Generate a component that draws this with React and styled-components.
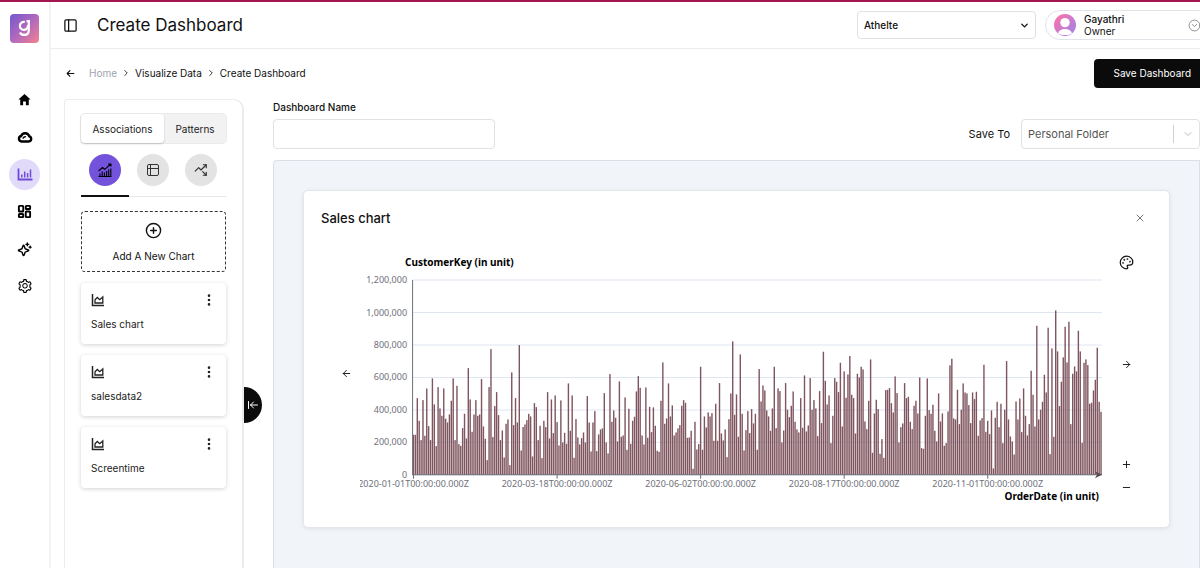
import React from 'react';
import styled, { createGlobalStyle } from 'styled-components';
import {
  ArrowLeft,
  ArrowLeftToLine,
  ArrowRight,
  ChevronDown,
  ChevronRight,
  CircleChevronDown,
  CirclePlus,
  LayoutDashboard,
  Minus,
  Palette,
  PanelLeft,
  Plus,
  TrendingUpDown,
  X,
} from 'lucide-react';
import { AiOutlineSetting } from 'react-icons/ai';
import { BsThreeDotsVertical } from 'react-icons/bs';
import { FaArrowLeft } from 'react-icons/fa6';
import { IoMdHome } from 'react-icons/io';
import { PiSparkleBold } from 'react-icons/pi';

const GlobalStyle = createGlobalStyle`
  * {
    box-sizing: border-box;
  }

  body {
    margin: 0;
    background: #fff;
    color: #111;
    font-family: Inter, 'Open Sans', sans-serif;
    font-size: 11px;
    overflow: hidden;
  }

  button, input, select {
    font: inherit;
    color: inherit;
  }

  button {
    padding: 0;
    border: 0;
    background: none;
    cursor: pointer;
  }

  svg {
    display: block;
    flex-shrink: 0;
  }
`;

const Page = styled.div`
  display: flex;
  min-height: 100vh;
  border-top: 2px solid #a3164f;
`;

const Sidebar = styled.aside`
  display: flex;
  flex-direction: column;
  align-items: center;
  width: 51px;
  padding-top: 12px;
  border-right: 2px solid #f3f3f4;
`;

const SideNav = styled.nav`
  display: flex;
  flex-direction: column;
  justify-content: space-between;
  height: 218px;
  margin-top: 41px;
`;

const SideLink = styled.a`
  display: flex;
  align-items: center;
  justify-content: center;
  width: 31px;
  height: 31px;
  border-radius: 50%;
  color: ${({ $active }) => ($active ? '#6d4bd8' : '#000')};
  background: ${({ $active }) => ($active ? '#e2daf9' : 'transparent')};
`;

const Main = styled.main`
  display: flex;
  flex: 1;
  flex-direction: column;
  min-width: 0;
  overflow: hidden;
`;

const TopBar = styled.header`
  display: flex;
  align-items: center;
  height: 47px;
  padding-left: 12px;
  border-bottom: 1px solid #ececee;
`;

const Title = styled.h1`
  flex: 1;
  margin: 0 0 0 19px;
  font-size: 17px;
  font-weight: 400;
`;

const SelectBox = styled.div`
  position: relative;
  display: flex;
  align-items: center;
  width: 179px;
  height: ${({ $height }) => $height};
  border: 1px solid #dfe1e5;
  border-radius: 4px;
  color: ${({ $muted }) => ($muted ? '#555' : '#111')};

  select {
    width: 100%;
    height: 100%;
    padding: 0 28px 0 6px;
    border: 0;
    background: none;
    font-size: ${({ $muted }) => ($muted ? '11px' : '10px')};
    font-weight: ${({ $muted }) => ($muted ? '400' : '500')};
    appearance: none;
  }
`;

const SelectArrow = styled.span`
  position: absolute;
  right: 5px;
  display: flex;
  align-items: center;
  height: 18px;
  padding-left: 8px;
  border-left: 1px solid ${({ $divided }) => ($divided ? '#d0d0d0' : 'transparent')};
  color: ${({ $divided }) => ($divided ? '#bbb' : '#111')};
  pointer-events: none;
`;

const Profile = styled.button`
  display: flex;
  align-items: center;
  width: 168px;
  height: 30px;
  margin: 0 -13px 0 9px;
  padding: 0 11px 0 8px;
  border: 1px solid #e2e3e8;
  border-radius: 15px;
  text-align: left;
  line-height: 12px;
`;

const ProfileText = styled.span`
  flex: 1;
  margin-left: 8px;
  font-size: 10px;
`;

const ProfileName = styled.span`
  display: block;
  font-weight: 500;
`;

const CrumbBar = styled.div`
  display: flex;
  align-items: center;
  height: 48px;
  margin-bottom: 2px;
  padding-left: 15px;
`;

const Crumbs = styled.nav`
  display: flex;
  flex: 1;
  align-items: center;
  gap: 4px;
  margin-left: 14px;
  font-size: 10px;
`;

const Crumb = styled.a`
  color: ${({ $muted }) => ($muted ? '#9ca3af' : '#111')};
  text-decoration: none;
`;

const SaveButton = styled.button`
  height: 29px;
  margin-right: -10px;
  padding: 0 19px;
  border-radius: 4px;
  background: #0b0b0c;
  color: #fff;
  font-size: 10px;
`;

const Workspace = styled.div`
  display: flex;
  flex: 1;
  padding-left: 13px;
`;

const ChartPanel = styled.section`
  position: relative;
  width: 180px;
  padding: 14px 16px;
  border: 1px solid #ececee;
  border-width: 1px 2px 0 1px;
  border-radius: 4px 10px 0 0;
`;

const Toggle = styled.div`
  display: flex;
  height: 29px;
  border-radius: 4px;
  background: #f2f2f3;
  box-shadow: 0 0 0 1px #ebebed;
`;

const ToggleButton = styled.button`
  flex: ${({ $active }) => ($active ? '83' : '62')} 1 0;
  border-radius: 4px;
  background: ${({ $active }) => ($active ? '#fff' : 'transparent')};
  box-shadow: ${({ $active }) => ($active ? '0 1px 2px rgba(0, 0, 0, 0.2)' : 'none')};
  color: #222;
  font-size: 10px;
`;

const TypeTabs = styled.div`
  display: flex;
  margin: 11px 0 14px;
  border-bottom: 1px solid #e6e6e8;
`;

const TypeTab = styled.button`
  display: flex;
  justify-content: center;
  width: 48px;
  height: 43px;
  margin-bottom: -1px;
  border-bottom: 2px solid ${({ $active }) => ($active ? '#111' : 'transparent')};

  span {
    display: flex;
    align-items: center;
    justify-content: center;
    width: 32px;
    height: 32px;
    border-radius: 50%;
    color: ${({ $active }) => ($active ? '#000' : '#333')};
    background: ${({ $active }) => ($active ? '#7352dc' : '#e3e3e4')};
  }
`;

const AddChart = styled.button`
  display: flex;
  flex-direction: column;
  align-items: center;
  justify-content: center;
  gap: 11px;
  width: 100%;
  height: 61px;
  border: 1px dashed #333;
  border-radius: 4px;
  font-size: 10px;
`;

const ChartList = styled.ul`
  display: flex;
  flex-direction: column;
  gap: 11px;
  margin: 11px 0 0;
  padding: 0;
  list-style: none;
`;

const ChartItem = styled.li`
  height: 61px;
  padding: 10px;
  border-radius: 4px;
  background: #fff;
  box-shadow: 0 1px 4px rgba(0, 0, 0, 0.18);
  color: #222;
  font-size: 10px;
`;

const ChartItemHead = styled.div`
  display: flex;
  justify-content: space-between;
  margin-bottom: 11px;
`;

const Collapse = styled.button`
  position: absolute;
  top: 287px;
  right: -20px;
  display: flex;
  align-items: center;
  justify-content: center;
  width: 18px;
  height: 36px;
  border-radius: 0 18px 18px 0;
  background: #0b0b0c;
  color: #fff;
`;

const Editor = styled.section`
  display: flex;
  flex: 1;
  flex-direction: column;
  min-width: 0;
  padding-left: 29px;
`;

const EditorForm = styled.form`
  display: flex;
  align-items: flex-end;
  justify-content: space-between;
  height: 50px;
`;

const NameField = styled.label`
  display: flex;
  flex-direction: column;
  gap: 5px;
  width: 24%;
  font-size: 10px;
  font-weight: 500;
  line-height: 14px;

  input {
    height: 30px;
    padding: 0 8px;
    border: 1px solid #dfe1e5;
    border-radius: 4px;
  }
`;

const SaveTo = styled.div`
  display: flex;
  align-items: center;
  gap: 11px;
`;

const Canvas = styled.div`
  flex: 1;
  margin-top: 11px;
  padding: 29px;
  border: 1px solid #dcdfe6;
  border-width: 1px 1px 0 1px;
  border-radius: 4px 0 0 0;
  background: #f1f4f8;
`;

const ChartCard = styled.article`
  border: 1px solid #e3e6eb;
  border-radius: 5px;
  background: #fff;
  box-shadow: 0 1px 4px rgba(0, 0, 0, 0.08);
`;

const CardHead = styled.header`
  display: flex;
  align-items: center;
  justify-content: space-between;
  height: 54px;
  padding: 0 23px 0 17px;

  h2 {
    margin: 0;
    font-size: 13px;
    font-weight: 500;
  }

  button {
    color: #777;
  }
`;

const CardBody = styled.div`
  display: grid;
  grid-template-columns: 56px 1fr 67px;
  padding-bottom: 18px;
`;

const PrevColumn = styled.div`
  display: flex;
  align-items: center;
  justify-content: flex-end;
  padding: 0 8px 8px 0;
`;

const Tools = styled.div`
  display: flex;
  flex-direction: column;
  align-items: center;
  justify-content: space-between;
  width: 14px;
  margin-left: 17px;
  padding: 10px 0 16px;
`;

const ZoomButtons = styled.div`
  display: flex;
  flex-direction: column;
  gap: 12px;
`;

const ChartSvg = styled.svg`
  width: 100%;
  font-family: 'Noto Sans', sans-serif;
  font-size: 9px;

  .label {
    fill: #6e7079;
  }

  .name {
    fill: #000;
    font-size: 10px;
    font-weight: 700;
  }
`;

// customer key per day, 584 is the top of the scale (1,200,000)
const SCALE_TOP = 584;
const DAYS = [
  120, 120, 230, 162, 104, 224, 117, 259, 146, 104, 289, 211, 86, 263, 199, 177, 259, 168, 157, 181,
  222, 289, 104, 267, 92, 87, 140, 183, 109, 320, 226, 129, 181, 224, 177, 181, 287, 145, 108, 44,
  263, 377, 113, 206, 248, 179, 104, 133, 52, 153, 166, 29, 307, 149, 230, 157, 389, 73, 143, 151,
  164, 183, 175, 55, 215, 203, 104, 147, 50, 162, 143, 248, 109, 226, 125, 238, 158, 88,
  223, 97, 126, 93, 274, 132, 238, 51, 167, 112, 91, 110, 127, 97, 236, 157, 70, 157, 191, 71,
  121, 136, 139, 245, 97, 64, 302, 159, 193, 171, 100, 280, 114, 118, 232, 75, 198, 93, 162, 174,
  250, 296, 261, 118, 91, 262, 111, 204, 128, 202, 147, 72, 69, 222, 337, 153, 169, 274, 175, 208,
  118, 127, 139, 149, 207, 224, 216, 111, 112, 132, 18, 159, 76, 92, 324, 75, 175, 142, 187, 175,
  185, 102, 213, 102, 275, 124, 103, 136, 53, 167, 244, 400, 180, 241, 114,
  361, 183, 73, 134, 191, 125, 197, 154, 183, 75, 317, 220, 268, 253, 193, 175, 132, 199, 324, 140,
  259, 251, 97, 133, 275, 195, 173, 207, 250, 159, 136, 127, 230, 141, 298, 130, 148, 290, 195, 224,
  199, 116, 251, 155, 369, 282, 211, 238, 95, 177, 290, 279, 248, 336, 145, 310, 231, 301, 356, 240,
  230, 124, 303, 292, 324, 316, 160, 137, 222, 346, 66, 184, 225, 197, 63, 107, 51, 254, 255, 260,
  215, 187, 295, 245, 97, 143, 154, 275, 230, 234, 159, 137, 207, 222, 184, 292, 80, 78, 177, 289,
  194, 183, 210, 132, 100,
  244, 160, 184, 87, 95, 190, 328, 348, 169, 166, 255, 152, 195, 274, 247, 244, 209, 155, 247, 227,
  249, 117, 163, 170, 330, 129, 162, 122, 193, 19, 171, 219, 143, 213, 95, 195, 341, 166, 115, 100,
  61, 220, 166, 229, 128, 259, 177, 118, 152, 312, 240, 145, 447, 166, 195, 219, 300, 247, 441, 62,
  379, 114, 493, 370, 206, 279, 352, 444, 337, 459, 152, 303, 325, 310, 432, 370, 96, 336, 346, 329,
  213, 216, 253, 285, 381, 219, 189,
];

const PLOT = { left: 52.5, right: 741, top: 35, bottom: 229.5 };
const Y_LABELS = ['1,200,000', '1,000,000', '800,000', '600,000', '400,000', '200,000', '0'];
const X_LABELS = [
  { day: 0, date: '2020-01-01' },
  { day: 76, date: '2020-03-18' },
  { day: 152, date: '2020-06-02' },
  { day: 228, date: '2020-08-17' },
  { day: 304, date: '2020-11-01' },
];

const plotHeight = PLOT.bottom - PLOT.top;
const dayWidth = (PLOT.right - PLOT.left) / DAYS.length;
const dayX = (day) => PLOT.left + (day + 0.5) * dayWidth;

const SalesChart = () => (
  <ChartSvg viewBox="0 0 741 264" role="img" aria-label="Sales chart">
    <text className="name" x="45" y="21">CustomerKey (in unit)</text>
    {Y_LABELS.map((label, i) => {
      const y = PLOT.top + (plotHeight * i) / 6;
      return (
        <g key={label}>
          <line x1={PLOT.left} x2={PLOT.right} y1={y} y2={y} stroke="#e0e6f1" />
          <text className="label" x="47" y={y + 3} textAnchor="end">{label}</text>
        </g>
      );
    })}
    {DAYS.map((value, day) => {
      const height = (value / SCALE_TOP) * plotHeight;
      return (
        <rect
          key={day}
          x={dayX(day) - 0.7}
          y={PLOT.bottom - height}
          width="1.4"
          height={height}
          fill="#71424e"
          fillOpacity="0.9"
        />
      );
    })}
    <path
      d={`M${PLOT.left} ${PLOT.top}V${PLOT.bottom}H${PLOT.right}`}
      fill="none"
      stroke="#6e7079"
    />
    <path d="M741 229.5l-7-3.5 2 3.5-2 3.5z" fill="#5c4a50" />
    {X_LABELS.map(({ day, date }) => (
      <g key={date}>
        <line x1={dayX(day)} x2={dayX(day)} y1={PLOT.bottom} y2={PLOT.bottom + 4} stroke="#6e7079" />
        <text className="label" x={dayX(day)} y="242" textAnchor="middle">{`${date}T00:00:00.000Z`}</text>
      </g>
    ))}
    <text className="name" x="738" y="255" textAnchor="end">OrderDate (in unit)</text>
  </ChartSvg>
);

const Logo = () => (
  <svg width="29" height="29" viewBox="0 0 29 29" aria-label="Logo">
    <defs>
      <linearGradient id="logo" x1="0" y1="0" x2="1" y2="1">
        <stop offset="0" stopColor="#7257cf" />
        <stop offset="0.5" stopColor="#b169bd" />
        <stop offset="1" stopColor="#f4828f" />
      </linearGradient>
    </defs>
    <rect width="29" height="29" rx="4" fill="url(#logo)" />
    <g fill="none" stroke="#fff" strokeWidth="2.2">
      <path d="M14.8 8A4 4 0 1 0 17.800 11" />
      <path d="M18.800 6.300v9.700c0 3.400-1.700 4.900-4.400 4.900-2.200 0-3.800-.8-4.400-2.400" />
      <path d="M16.500 7.200h3.400" />
    </g>
  </svg>
);

const Avatar = () => (
  <svg width="22" height="22" viewBox="0 0 22 22">
    <defs>
      <linearGradient id="avatar" x1="0" y1="0" x2="1" y2="1">
        <stop offset="0.2" stopColor="#ee74b4" />
        <stop offset="0.9" stopColor="#a583e6" />
      </linearGradient>
    </defs>
    <circle cx="11" cy="11" r="11" fill="url(#avatar)" />
    <g fill="#fff">
      <circle cx="11" cy="8.6" r="4.7" />
      <path d="M4 19.500c.6-3 3.400-4.500 7-4.500s6.400 1.500 7 4.500c-1.800 1.100-4 1.600-7 1.600s-5.200-.5-7-1.600z" />
    </g>
  </svg>
);

const CloudIcon = () => (
  <svg width="16" height="16" viewBox="0 0 16 16" fill="none" stroke="currentColor">
    <path d="M4.500 12.500h7.200a2.600 2.600 0 0 0 .6-5.100A4.300 4.300 0 0 0 4.100 7a2.800 2.800 0 0 0 .4 5.500z" strokeWidth="2.400" />
    <path d="M6 9.600a2.300 2.300 0 0 1 2.900-1.800" strokeWidth="1.400" />
  </svg>
);

const BarsIcon = () => (
  <svg width="16" height="16" viewBox="0 0 16 16" fill="none" stroke="currentColor">
    <path d="M1.500 2.500v11h14" strokeWidth="1.800" />
    <path d="M4.800 11.500V8.500M7.700 11.500V5.500M10.600 11.500V7M13.500 11.500V3.500" strokeWidth="1.500" />
  </svg>
);

const AreaIcon = () => (
  <svg width="14" height="14" viewBox="0 0 14 14" fill="none" stroke="currentColor">
    <path d="M1.500 1v11.500H13" strokeWidth="1.500" />
    <path d="M4 10V6.800l2.300-2.300 2.400 2.200L11.800 4v6z" strokeWidth="1.300" />
  </svg>
);

const ComboIcon = () => (
  <svg width="14" height="14" viewBox="0 0 14 14" fill="none" stroke="currentColor">
    <path d="M.5 8l4-3.500 2.300 1.800L12.800 1M10 1h3v2.500" strokeWidth="1.100" />
    <path d="M2 13.500v-3M4.200 13.500v-5M6.400 13.500V9.500M8.600 13.500V8M10.700 13.500V6.500M12.800 13.500V5.500M.5 13.500h13" strokeWidth="1.100" />
  </svg>
);

const TableIcon = () => (
  <svg width="14" height="14" viewBox="0 0 14 14" fill="none" stroke="currentColor">
    <rect x="1.500" y="1.500" width="11" height="11" rx="1.500" />
    <path d="M4.500 1.500v11M1.500 5.500h11" />
  </svg>
);

const sideItems = [
  { name: 'Home', icon: <IoMdHome size={15} /> },
  { name: 'Data', icon: <CloudIcon /> },
  { name: 'Visualize', icon: <BarsIcon />, active: true },
  { name: 'Dashboards', icon: <LayoutDashboard size={15} strokeWidth={3} /> },
  { name: 'Insights', icon: <PiSparkleBold size={15} /> },
  { name: 'Settings', icon: <AiOutlineSetting size={16} /> },
];

const charts = ['Sales chart', 'salesdata2', 'Screentime'];

const Side = () => (
  <Sidebar>
    <Logo />
    <SideNav>
      {sideItems.map(({ name, icon, active }) => (
        <SideLink key={name} href="#" aria-label={name} $active={active}>{icon}</SideLink>
      ))}
    </SideNav>
  </Sidebar>
);

const Header = () => (
  <TopBar>
    <button type="button" aria-label="Toggle sidebar"><PanelLeft size={15} /></button>
    <Title>Create Dashboard</Title>
    <SelectBox $height="28px">
      <select aria-label="Workspace" defaultValue="Athelte">
        <option>Athelte</option>
      </select>
      <SelectArrow><ChevronDown size={11} strokeWidth={3} /></SelectArrow>
    </SelectBox>
    <Profile type="button">
      <Avatar />
      <ProfileText>
        <ProfileName>Gayathri</ProfileName>
        Owner
      </ProfileText>
      <CircleChevronDown size={13} strokeWidth={1.5} color="#777" />
    </Profile>
  </TopBar>
);

const Panel = () => (
  <ChartPanel>
    <Toggle>
      <ToggleButton type="button" $active>Associations</ToggleButton>
      <ToggleButton type="button">Patterns</ToggleButton>
    </Toggle>
    <TypeTabs>
      <TypeTab type="button" aria-label="Charts" $active><span><ComboIcon /></span></TypeTab>
      <TypeTab type="button" aria-label="Tables"><span><TableIcon /></span></TypeTab>
      <TypeTab type="button" aria-label="Trends"><span><TrendingUpDown size={14} /></span></TypeTab>
    </TypeTabs>
    <AddChart type="button">
      <CirclePlus size={17} />
      Add A New Chart
    </AddChart>
    <ChartList>
      {charts.map((name) => (
        <ChartItem key={name}>
          <ChartItemHead>
            <AreaIcon />
            <button type="button" aria-label={`${name} options`}><BsThreeDotsVertical size={14} /></button>
          </ChartItemHead>
          {name}
        </ChartItem>
      ))}
    </ChartList>
    <Collapse type="button" aria-label="Collapse panel"><ArrowLeftToLine size={12} /></Collapse>
  </ChartPanel>
);

function App() {
  return (
    <Page>
      <GlobalStyle />
      <Side />
      <Main>
        <Header />
        <CrumbBar>
          <button type="button" aria-label="Back"><FaArrowLeft size={9} /></button>
          <Crumbs>
            <Crumb href="#" $muted>Home</Crumb>
            <ChevronRight size={10} />
            <Crumb href="#">Visualize Data</Crumb>
            <ChevronRight size={10} />
            <Crumb href="#">Create Dashboard</Crumb>
          </Crumbs>
          <SaveButton type="button">Save Dashboard</SaveButton>
        </CrumbBar>
        <Workspace>
          <Panel />
          <Editor>
            <EditorForm>
              <NameField>
                Dashboard Name
                <input type="text" />
              </NameField>
              <SaveTo>
                <label htmlFor="folder">Save To</label>
                <SelectBox $height="30px" $muted>
                  <select id="folder" defaultValue="Personal Folder">
                    <option>Personal Folder</option>
                  </select>
                  <SelectArrow $divided><ChevronDown size={12} /></SelectArrow>
                </SelectBox>
              </SaveTo>
            </EditorForm>
            <Canvas>
              <ChartCard>
                <CardHead>
                  <h2>Sales chart</h2>
                  <button type="button" aria-label="Remove chart"><X size={12} /></button>
                </CardHead>
                <CardBody>
                  <PrevColumn>
                    <button type="button" aria-label="Previous"><ArrowLeft size={11} /></button>
                  </PrevColumn>
                  <SalesChart />
                  <Tools>
                    <button type="button" aria-label="Colors"><Palette size={15} /></button>
                    <button type="button" aria-label="Next"><ArrowRight size={11} /></button>
                    <ZoomButtons>
                      <button type="button" aria-label="Zoom in"><Plus size={11} /></button>
                      <button type="button" aria-label="Zoom out"><Minus size={11} /></button>
                    </ZoomButtons>
                  </Tools>
                </CardBody>
              </ChartCard>
            </Canvas>
          </Editor>
        </Workspace>
      </Main>
    </Page>
  );
}

export default App;
